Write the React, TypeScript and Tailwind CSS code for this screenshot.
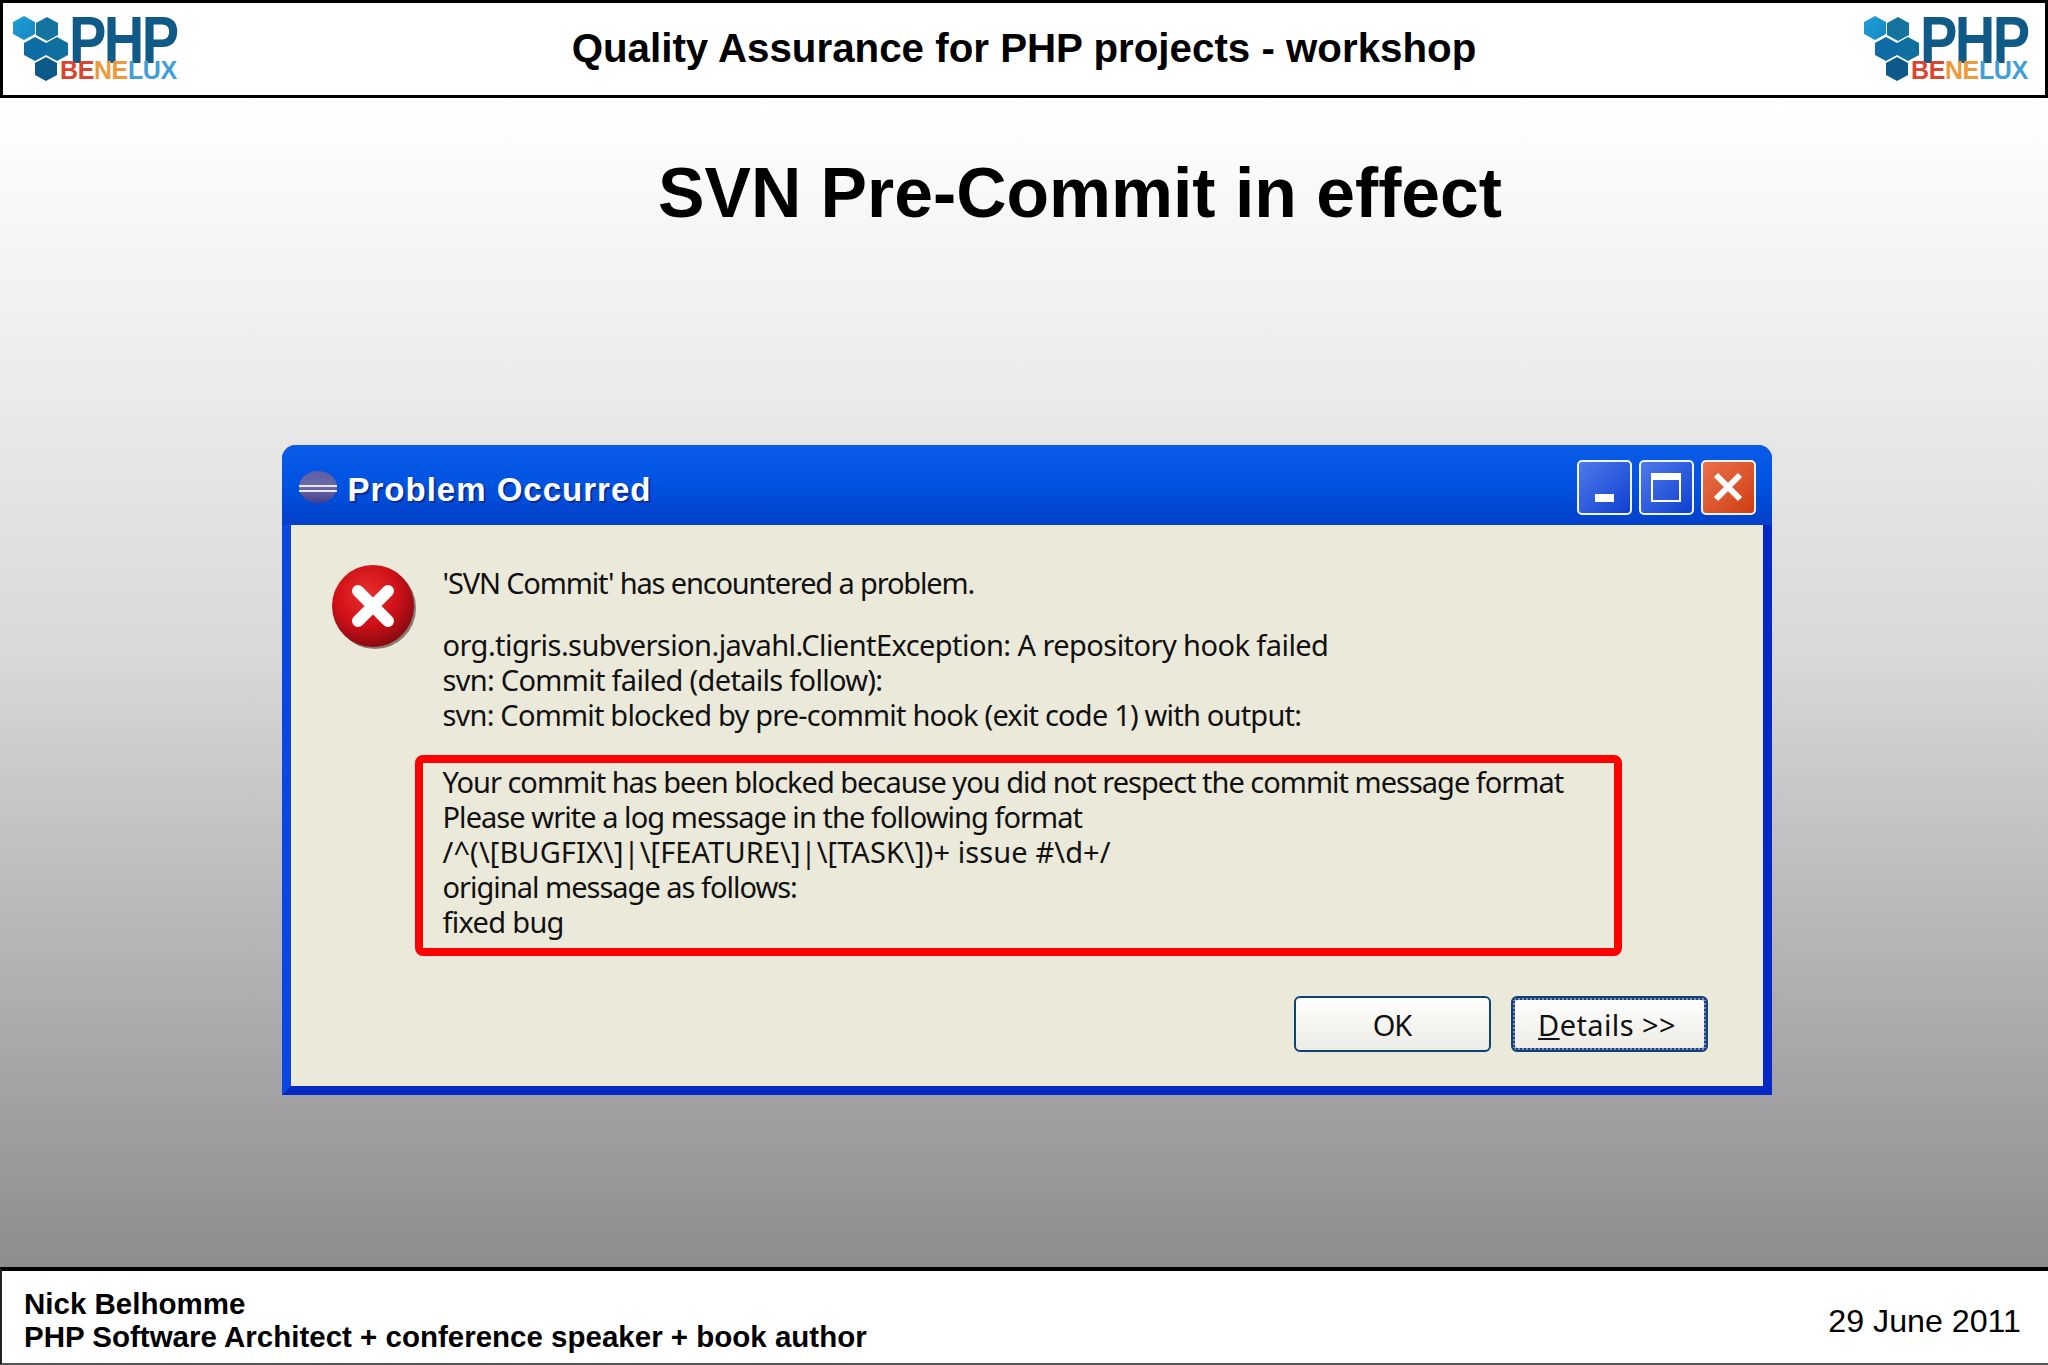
import React from 'react'

const sans = "font-['Liberation_Sans',Arial,sans-serif]"
const tahoma = "font-['Noto_Sans',Tahoma,sans-serif]"

const Logo = () => (
  <div className="relative h-[90px] w-[170px] shrink-0">
    <svg width="66" height="84" viewBox="3 0 66 84" className="absolute -top-[4px] left-0">
      <defs>
        <linearGradient id="hex1" x1="0" y1="0" x2="1" y2="1">
          <stop offset="0" stopColor="#1f9fd8" />
          <stop offset="1" stopColor="#1687c2" />
        </linearGradient>
      </defs>
      <polygon points="24,16 35,22 35,34 24,40 13,34 13,22" fill="url(#hex1)" />
      <polygon points="47,17 58,23 58,35 47,41 36,35 36,23" fill="#15749f" />
      <polygon points="35,37 46,43 46,55 35,61 24,55 24,43" fill="#0f6ba3" />
      <polygon points="57,37 68,43 68,55 57,61 46,55 46,43" fill="#0f6f9f" />
      <polygon points="46,57 57,63 57,75 46,81 35,75 35,63" fill="#0d5a8a" />
    </svg>
    <div className={`${sans} absolute left-[66px] top-[13px] origin-left scale-x-[0.85] text-[66px] leading-[46px] font-bold tracking-[-3px] text-[#0f5a87]`}>PHP</div>
    <div className={`${sans} absolute left-[57px] top-[57px] text-[25px] leading-[18px] font-bold tracking-[-0.4px]`}>
      <span className="text-[#d9452f]">BE</span>
      <span className="text-[#ee9a3a]">NE</span>
      <span className="text-[#3f9fd6]">LUX</span>
    </div>
  </div>
)

const EclipseIcon = () => (
  <svg width="38" height="32" viewBox="0 0 38 32" className="shrink-0">
    <defs>
      <linearGradient id="ecl" x1="0" y1="0" x2="0" y2="1">
        <stop offset="0" stopColor="#5c5fa6" />
        <stop offset="0.5" stopColor="#6d6aa8" />
        <stop offset="1" stopColor="#45408c" />
      </linearGradient>
    </defs>
    <ellipse cx="19" cy="16" rx="19" ry="16" fill="url(#ecl)" />
    <rect x="0" y="14" width="38" height="2" fill="#e8e8f4" />
    <rect x="0" y="19" width="38" height="2" fill="#e8e8f4" />
  </svg>
)

const ErrorIcon = () => (
  <svg width="86" height="86" viewBox="0 0 86 86" className="mt-[6px] shrink-0">
    <defs>
      <radialGradient id="err" cx="0.42" cy="0.35" r="0.7">
        <stop offset="0" stopColor="#e8302c" />
        <stop offset="0.55" stopColor="#cf1018" />
        <stop offset="1" stopColor="#7e0a0e" />
      </radialGradient>
    </defs>
    <circle cx="44" cy="44" r="41" fill="#4a3030" opacity="0.6" />
    <circle cx="42" cy="42" r="41" fill="url(#err)" />
    <path d="M27 27 L57 57 M57 27 L27 57" stroke="#ffffff" strokeWidth="12" strokeLinecap="round" />
  </svg>
)

const Caption = ({ className, children }: { className: string; children: React.ReactNode }) => (
  <div className={`flex h-[55px] w-[55px] items-center justify-center rounded-[5px] border-2 border-[#f2f4fb] ${className}`}>
    {children}
  </div>
)

const App = () => {
  return (
    <div className={`${sans} flex h-[1365px] w-[2048px] flex-col overflow-hidden bg-white text-black`}>
      {/* header */}
      <header className="flex h-[98px] shrink-0 items-center border-[3px] border-black bg-white pr-[21px]">
        <Logo />
        <h1 className="ml-[21px] flex-1 text-center text-[40.3px] leading-none font-bold">Quality Assurance for PHP projects - workshop</h1>
        <Logo />
      </header>

      <main className="flex flex-1 flex-col items-center bg-gradient-to-b from-white via-[#d8d8d9] via-[48%] to-[#8e8c8f]">
        <h2 className="mt-[55px] ml-[112px] text-[69.7px] leading-[80px] font-bold">SVN Pre-Commit in effect</h2>

        {/* dialog */}
        <section className="mt-[212px] ml-[5px] h-[650px] w-[1490px] rounded-t-[14px] border-r-[9px] border-b-[9px] border-l-[9px] border-r-[#0628c6] border-b-[#0628c6] border-l-[#0a47de] bg-[#ebe9da]">
          <div className="-mx-[9px] flex h-[80px] items-center rounded-t-[14px] bg-gradient-to-b from-[#0a5ce8] via-[#0052e0] to-[#0340c8] pt-[4px] pr-[16px] pl-[17px]">
            <EclipseIcon />
            <span className="mt-[5px] ml-[11px] text-[33px] leading-none font-bold tracking-[1px] text-white [text-shadow:2px_2px_0_#0a2f90]">Problem Occurred</span>
            <div className="ml-auto flex gap-[7px]">
              <Caption className="bg-gradient-to-br from-[#4f78ea] to-[#0c3fd0]">
                <div className="mt-[22px] h-[8px] w-[19px] bg-white" />
              </Caption>
              <Caption className="bg-gradient-to-br from-[#4f78ea] to-[#0c3fd0]">
                <div className="h-[29px] w-[30px] border-2 border-t-[7px] border-white" />
              </Caption>
              <Caption className="bg-gradient-to-br from-[#e8704a] to-[#d03c0c]">
                <svg width="32" height="32" viewBox="0 0 32 32">
                  <path d="M4 4 L28 28 M28 4 L4 28" stroke="#ffffff" strokeWidth="6" />
                </svg>
              </Caption>
            </div>
          </div>

          <div className={`${tahoma} px-[40px] pt-[33px] text-[29px] leading-[35px] text-[#111]`}>
            <div className="flex">
              <ErrorIcon />
              <div className="ml-[26px] pt-[7px]">
                <p className="tracking-[-1.15px]">'SVN Commit' has encountered a problem.</p>
                <p className="mt-[27px] tracking-[-0.56px]">org.tigris.subversion.javahl.ClientException: A repository hook failed</p>
                <p className="tracking-[-0.7px]">svn: Commit failed (details follow):</p>
                <p className="tracking-[-0.8px]">svn: Commit blocked by pre-commit hook (exit code 1) with output:</p>
              </div>
            </div>
            <div className="mt-[23px] ml-[84px] h-[201px] w-[1207px] rounded-[8px] border-[8px] border-[#fe0000] pt-[1px] pl-[20px]">
              <p className="tracking-[-1px]">Your commit has been blocked because you did not respect the commit message format</p>
              <p className="tracking-[-0.95px]">Please write a log message in the following format</p>
              <p className="tracking-[0.1px]">/^(\[BUGFIX\]|\[FEATURE\]|\[TASK\])+ issue #\d+/</p>
              <p className="tracking-[-1px]">original message as follows:</p>
              <p className="tracking-[-0.7px]">fixed bug</p>
            </div>
            <div className="mt-[40px] mr-[15px] flex justify-end gap-[20px]">
              <button className="h-[56px] w-[197px] rounded-[6px] border-2 border-[#0d4470] bg-gradient-to-b from-white to-[#ecebe4] tracking-[-1px]">OK</button>
              <button className="h-[56px] w-[197px] rounded-[6px] border-2 border-[#0d4470] bg-gradient-to-b from-white to-[#ecebe4] ring-2 ring-inset ring-[#6f8fe0]">
                <span className="flex h-full items-center justify-center border-2 border-dotted border-[#3a3a6a] pr-[4px]">
                  <span className="tracking-[0.4px]"><span className="underline">D</span>etails &gt;&gt;</span>
                </span>
              </button>
            </div>
          </div>
        </section>
      </main>

      {/* footer */}
      <footer className="flex h-[98px] shrink-0 items-center justify-between border-t-[4px] border-b-2 border-l-2 border-t-black border-b-[#555] border-l-[#222] bg-white pt-[5px] pr-[27px] pl-[22px]">
        <div className="text-[29.5px] leading-[33px] font-bold">
          <p>Nick Belhomme</p>
          <p>PHP Software Architect + conference speaker + book author</p>
        </div>
        <span className="mt-[3px] text-[32.2px]">29 June 2011</span>
      </footer>
    </div>
  )
}

export default App
